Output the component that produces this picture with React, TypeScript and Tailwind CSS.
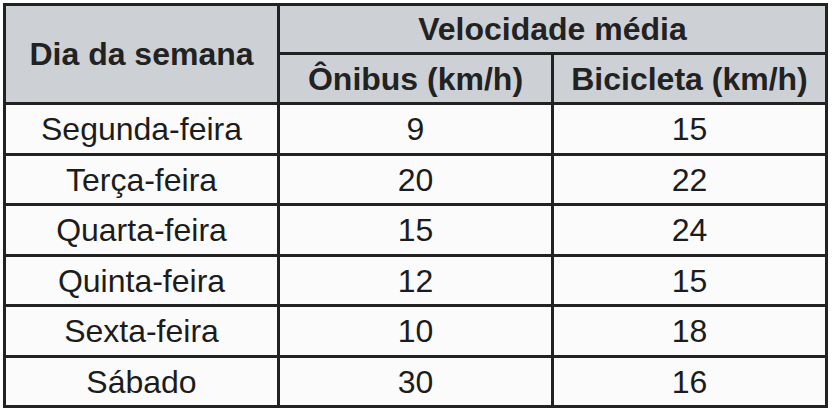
import { Fragment } from 'react';

const rows = [
  { dia: 'Segunda-feira', onibus: '9', bici: '15' },
  { dia: 'Terça-feira', onibus: '20', bici: '22' },
  { dia: 'Quarta-feira', onibus: '15', bici: '24' },
  { dia: 'Quinta-feira', onibus: '12', bici: '15' },
  { dia: 'Sexta-feira', onibus: '10', bici: '18' },
  { dia: 'Sábado', onibus: '30', bici: '16' },
];

const App = () => {
  return (
    <div
      className="w-[833px] h-[416px] bg-white pt-[3px] pl-[3px] text-[#1c1c1c]"
      style={{ fontFamily: '"Liberation Sans", Arial, sans-serif' }}
    >
      <div className="w-[825px] grid grid-cols-[271px_271px_271px] grid-rows-[46px_47px_48px_47px_48px_47px_48px_47px] gap-[3px] p-[3px] bg-[#222]">
        {/* Header */}
        <div className="row-span-2 bg-[#cdd1d5] flex items-center justify-center text-[32px] font-bold text-[#222]">
          Dia da semana
        </div>
        <div className="col-span-2 bg-[#cdd1d5] flex items-center justify-center text-[32px] font-bold text-[#222]">
          Velocidade média
        </div>
        <div className="bg-[#cdd1d5] flex items-center justify-center text-[32px] font-bold text-[#222]">
          Ônibus (km/h)
        </div>
        <div className="bg-[#cdd1d5] flex items-center justify-center text-[32px] font-bold text-[#222]">
          Bicicleta (km/h)
        </div>

        {/* Body */}
        {rows.map((r) => (
          <Fragment key={r.dia}>
            <div className="bg-[#fbfbfb] flex items-center justify-center text-[32px]">{r.dia}</div>
            <div className="bg-[#fbfbfb] flex items-center justify-center text-[32px]">{r.onibus}</div>
            <div className="bg-[#fbfbfb] flex items-center justify-center text-[32px]">{r.bici}</div>
          </Fragment>
        ))}
      </div>
    </div>
  );
};

export default App;
